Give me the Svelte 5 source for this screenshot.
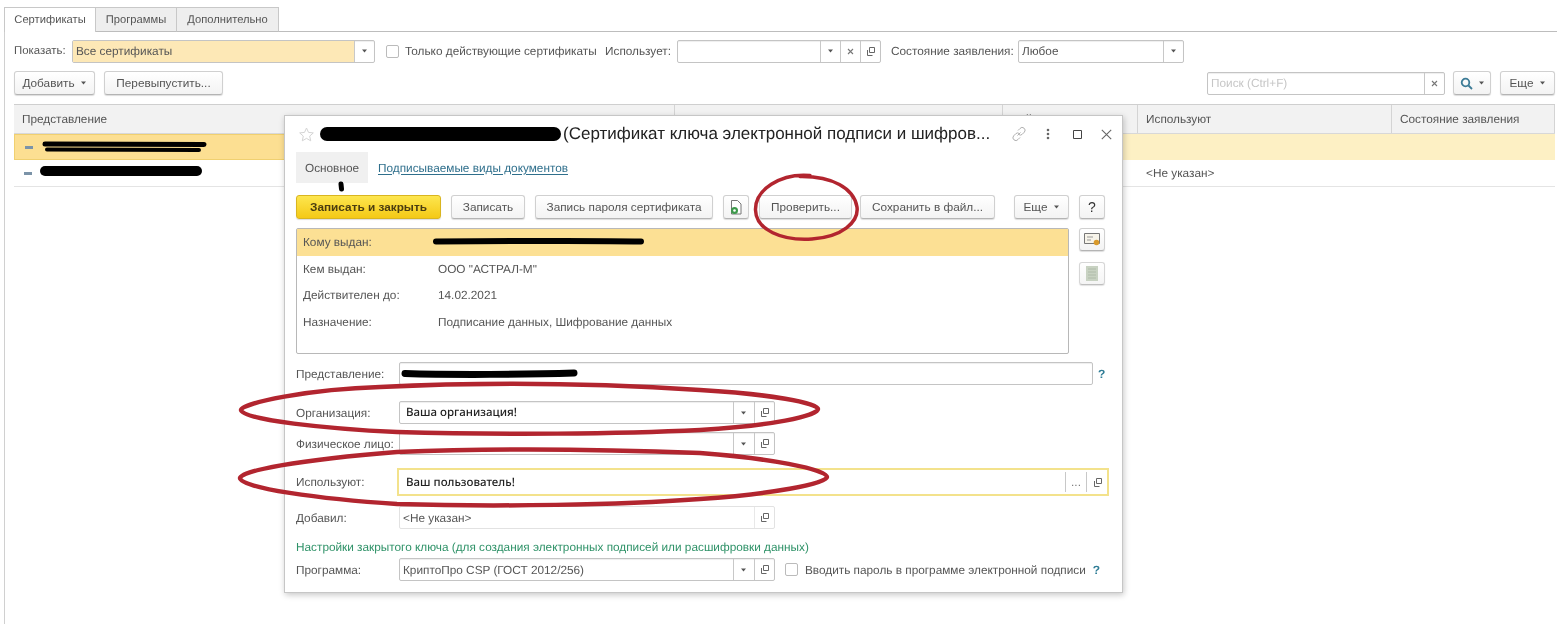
<script>
// filter row and table data
const columns = [
	{ title: "Представление", w: 661 },
	{ title: "Кем выдан", w: 328 },
	{ title: "Действителен до", w: 135 },
	{ title: "Используют", w: 254 },
	{ title: "Состояние заявления", w: 163 }
]

const info = [
	{ label: "Кому выдан:", value: "", current: true },
	{ label: "Кем выдан:", value: 'ООО "АСТРАЛ-М"' },
	{ label: "Действителен до:", value: "14.02.2021" },
	{ label: "Назначение:", value: "Подписание данных, Шифрование данных" }
]
</script>

{#snippet arrow()}
	<svg class="ico" width="7" height="4" viewBox="0 0 7 4"><path d="M1 0.5h5L3.5 3.5z" fill="#555"/></svg>
{/snippet}

{#snippet open()}
	<svg class="ico" width="11" height="11" viewBox="0 0 11 11" fill="none" stroke="#666"><path d="M4.5 1.500h5v5h-5z"/><path d="M2.500 4v5.500h5"/></svg>
{/snippet}

{#snippet cross()}
	<svg class="ico" width="7" height="7" viewBox="0 0 7 7" stroke="#777" stroke-width="1.100"><path d="M1 1l5 5M6 1L1 6"/></svg>
{/snippet}

<div class="page">
	<div class="tabs">
		<div class="tab active">Сертификаты</div>
		<div class="tab t2">Программы</div>
		<div class="tab t3">Дополнительно</div>
	</div>

	<div class="panel">
		<div class="filters">
			<span class="cap show-cap">Показать:</span>
			<div class="field show">
				<span class="val yellow">Все сертификаты</span>
				<span class="fbtn">{@render arrow()}</span>
			</div>
			<span class="check"></span>
			<span class="cap only">Только действующие сертификаты</span>
			<span class="cap uses">Использует:</span>
			<div class="field user">
				<span class="val"></span>
				<span class="fbtn">{@render arrow()}</span>
				<span class="fbtn">{@render cross()}</span>
				<span class="fbtn">{@render open()}</span>
			</div>
			<span class="cap state">Состояние заявления:</span>
			<div class="field status">
				<span class="val">Любое</span>
				<span class="fbtn">{@render arrow()}</span>
			</div>
		</div>

		<div class="toolbar">
			<button class="btn add">Добавить {@render arrow()}</button>
			<button class="btn reissue">Перевыпустить...</button>
			<div class="grow"></div>
			<div class="field search">
				<span class="val hint">Поиск (Ctrl+F)</span>
				<span class="fbtn">{@render cross()}</span>
			</div>
			<button class="btn find">
				<svg width="13" height="13" viewBox="0 0 13 13" fill="none" stroke="#3c7b96" stroke-width="1.800"><circle cx="5.500" cy="5.500" r="3.800"/><path d="M8.500 8.500l3.500 3.500"/></svg>
				{@render arrow()}
			</button>
			<button class="btn more">Еще {@render arrow()}</button>
		</div>

		<div class="table">
			<div class="thead">
				{#each columns as c}
					<div class="th" style="width:{c.w}px">{c.title}</div>
				{/each}
			</div>
			<div class="row selected">
				<div class="cell first" style="width:661px"><span class="dash"></span></div>
				<div class="cell" style="width:880px"></div>
			</div>
			<div class="row">
				<div class="cell" style="width:661px"><span class="dash"></span></div>
				<div class="cell" style="width:463px"></div>
				<div class="cell" style="width:417px">&lt;Не указан&gt;</div>
			</div>
		</div>
	</div>

	<div class="dialog">
		<div class="head">
			<svg class="star" width="15" height="15" viewBox="0 0 15 15" fill="none" stroke="#d4d4d4"><path d="M7.500 1l2 4.400 4.800.5-3.600 3.200 1 4.700-4.200-2.400-4.200 2.400 1-4.700L.7 5.900l4.800-.5z"/></svg>
			<span class="title">(Сертификат ключа электронной подписи и шифров...</span>
			<div class="wintools">
				<svg width="16" height="16" viewBox="0 0 16 16" fill="none" stroke="#b0b0b0" stroke-width="1"><path d="M6.500 9.500l3-3"/><path d="M7 4.500l2-2a2.600 2.600 0 0 1 4.400 3.600l-2.200 2.200a2.600 2.600 0 0 1-3.400.2"/><path d="M9 11.500l-2 2A2.600 2.600 0 0 1 2.600 9.900l2.200-2.200a2.600 2.600 0 0 1 3.400-.2"/></svg>
				<svg width="4" height="12" viewBox="0 0 4 12" fill="#666"><circle cx="2" cy="2" r="1.300"/><circle cx="2" cy="6" r="1.300"/><circle cx="2" cy="10" r="1.300"/></svg>
				<svg width="9" height="9" viewBox="0 0 9 9" fill="none" stroke="#444"><path d="M.5.500h8v8h-8z"/></svg>
				<svg width="11" height="11" viewBox="0 0 11 11" stroke="#666" stroke-width="1.100"><path d="M.8.800l9.400 9.400M10.200.800L.8 10.200"/></svg>
			</div>
		</div>

		<div class="subtabs">
			<div class="subtab">Основное</div>
			<span class="link">Подписываемые виды документов</span>
		</div>

		<div class="actions">
			<button class="btn primary">Записать и закрыть</button>
			<button class="btn w74">Записать</button>
			<button class="btn w178">Запись пароля сертификата</button>
			<button class="btn w26">
				<svg width="12" height="15" viewBox="0 0 12 15"><path d="M1.500.5h6l3.500 3.500v10h-9.500z" fill="#fff" stroke="#777"/><circle cx="4.500" cy="10.500" r="3.500" fill="#3d9a4b"/><circle cx="4.500" cy="10.500" r="1.300" fill="#fff"/></svg>
			</button>
			<button class="btn w93">Проверить...</button>
			<button class="btn w135">Сохранить в файл...</button>
			<button class="btn w55">Еще {@render arrow()}</button>
			<button class="btn help">?</button>
		</div>

		<div class="details">
			<div class="infobox">
				{#each info as r}
					<div class="inforow" class:current={r.current}>
						<span class="ilabel">{r.label}</span>
						<span>{r.value}</span>
					</div>
				{/each}
			</div>
			<div class="side">
				<button class="btn sq">
					<svg width="17" height="14" viewBox="0 0 17 14"><path d="M.5.500h15v10h-15z" fill="#f7f4ea" stroke="#777"/><path d="M3 4h6M3 7h4" stroke="#999"/><circle cx="12.500" cy="9.500" r="2.800" fill="#d99a2b"/></svg>
				</button>
				<button class="btn sq dim">
					<svg width="12" height="15" viewBox="0 0 12 15"><path d="M0 0h12v15H0z" fill="#bfcbb8"/><path d="M2 3h8M2 6h8M2 9h8M2 12h8" stroke="#a2b09b"/></svg>
				</button>
			</div>
		</div>

		<div class="frow name">
			<span class="flabel">Представление:</span>
			<div class="field wide"><span class="val"></span></div>
			<span class="q">?</span>
		</div>
		<div class="frow org">
			<span class="flabel">Организация:</span>
			<div class="field mid">
				<span class="val typed">Ваша организация!</span>
				<span class="fbtn">{@render arrow()}</span>
				<span class="fbtn">{@render open()}</span>
			</div>
		</div>
		<div class="frow person">
			<span class="flabel">Физическое лицо:</span>
			<div class="field mid">
				<span class="val"></span>
				<span class="fbtn">{@render arrow()}</span>
				<span class="fbtn">{@render open()}</span>
			</div>
		</div>
		<div class="frow users">
			<span class="flabel short">Используют:</span>
			<div class="field focus">
				<span class="val typed">Ваш пользователь!</span>
				<span class="fbtn">...</span>
				<span class="fbtn">{@render open()}</span>
			</div>
		</div>
		<div class="frow added">
			<span class="flabel">Добавил:</span>
			<div class="field mid light">
				<span class="val">&lt;Не указан&gt;</span>
				<span class="fbtn">{@render open()}</span>
			</div>
		</div>

		<div class="keynote">Настройки закрытого ключа (для создания электронных подписей или расшифровки данных)</div>
		<div class="frow prog">
			<span class="flabel">Программа:</span>
			<div class="field mid">
				<span class="val">КриптоПро CSP (ГОСТ 2012/256)</span>
				<span class="fbtn">{@render arrow()}</span>
				<span class="fbtn">{@render open()}</span>
			</div>
			<span class="check c2"></span>
			<span class="cap pass">Вводить пароль в программе электронной подписи</span>
			<span class="q q2">?</span>
		</div>
	</div>

	<!-- hand drawn marks on top of the screenshot -->
	<svg class="marks" width="1557" height="625" viewBox="0 0 1557 625" fill="none">
		<g stroke="#000" stroke-linecap="round">
			<path d="M45 144L204 144.500" stroke-width="5"/>
			<path d="M47 149.500L199 150" stroke-width="4"/>
			<path d="M45 171L197 171" stroke-width="10"/>
			<path d="M327 134L554 134" stroke-width="14"/>
			<path d="M436 241.500C500 241 600 240.500 641 241.500" stroke-width="6"/>
			<path d="M405 373.500C450 375 530 374.500 574 373" stroke-width="7"/>
			<path d="M341 184L341.500 189" stroke-width="5"/>
		</g>
		<g stroke="#b2252f" stroke-linecap="round">
			<path d="M810 175.500C780 173 755 190 755.500 210C756 230 782 241 812 239C842 237 859 222 857 207C854 188 832 176 800 176.500" stroke-width="3.500"/>
			<path d="M241 410C241 403 310 389 380 387C480 382 580 382 700 390C770 394 818 403 818 409C818 416 770 426 700 430C620 434 500 435 397 432C330 429 241 420 241 410Z" stroke-width="4.500"/>
			<path d="M240 478C240 471 297 460 397 452C497 448 597 449 700 453C767 458 827 469 827 477C827 484 770 494 700 499C620 505 497 507 397 504C320 499 240 488 240 478Z" stroke-width="4.500"/>
		</g>
	</svg>
</div>

<style>
	:global(body) {
		margin: 0;
		background: #fff;
	}

	.page {
		position: relative;
		width: 1557px;
		height: 625px;
		overflow: hidden;
		font-family: "Liberation Sans", Arial, sans-serif;
		font-size: 11.800px;
		text-rendering: geometricPrecision;
		color: #555;
		background: #fff;
		filter: blur(0.4px);
	}

	button {
		font: inherit;
		color: inherit;
		padding: 0;
	}

	.ico { flex: none; }
	.grow { flex: 1; }

	.tabs {
		display: flex;
		padding: 7px 0 0 4px;
		height: 24px;
		font-size: 11.200px;
	}

	.tab {
		box-sizing: border-box;
		height: 25px;
		display: flex;
		align-items: center;
		justify-content: center;
		border: 1px solid #c8c8c8;
		border-bottom: none;
		background: #eee;
	}

	.tab.active {
		width: 92px;
		background: #fff;
		position: relative;
		z-index: 1;
	}

	.t2 { width: 82px; margin-left: -1px; border-bottom: 1px solid #bdbdbd; }
	.t3 { width: 103px; margin-left: -1px; border-bottom: 1px solid #bdbdbd; }

	.panel {
		border-top: 1px solid #bdbdbd;
		border-left: 1px solid #d0d0d0;
		margin-left: 4px;
		height: 593px;
		padding-left: 9px;
		box-sizing: border-box;
	}

	.filters {
		display: flex;
		align-items: center;
		height: 22px;
		margin-top: 8px;
	}

	.cap { white-space: nowrap; flex: none; }
	.show-cap { width: 58px; font-size: 11.400px; }

	.field {
		box-sizing: border-box;
		display: flex;
		align-items: stretch;
		height: 23px;
		border: 1px solid #c4c4c4;
		border-radius: 2px;
		background: #fff;
		box-shadow: inset 0 1px 1px #eee;
	}

	.val {
		flex: 1;
		display: flex;
		align-items: center;
		padding-left: 3px;
		min-width: 0;
		white-space: nowrap;
	}

	.yellow { background: #fde8b6; }

	.fbtn {
		width: 19px;
		flex: none;
		display: flex;
		align-items: center;
		justify-content: center;
		border-left: 1px solid #c8c8c8;
		color: #777;
	}

	.show { width: 303px; }

	.check {
		box-sizing: border-box;
		display: block;
		width: 13px;
		height: 13px;
		flex: none;
		border: 1px solid #bbb;
		border-radius: 2px;
		margin-left: 11px;
		background: #fff;
	}

	.only { width: 191px; margin-left: 6px; }
	.uses { width: 72px; margin-left: 9px; }
	.user { width: 204px; }
	.state { width: 127px; margin-left: 10px; }
	.status { width: 166px; }

	.toolbar {
		display: flex;
		align-items: center;
		height: 24px;
		margin-top: 9px;
		padding-right: 2px;
	}

	.btn {
		box-sizing: border-box;
		height: 24px;
		display: inline-flex;
		align-items: center;
		justify-content: center;
		gap: 5px;
		border: 1px solid #d0d0d0;
		border-bottom-color: #b4b4b4;
		border-radius: 3px;
		background: linear-gradient(#fff, #f3f3f3);
		box-shadow: 0 1px 1px #ddd;
		white-space: nowrap;
	}

	.add { width: 81px; }
	.reissue { width: 119px; margin-left: 9px; }
	.search { width: 238px; }
	.hint { color: #c6c6c6; }
	.find { width: 38px; margin-left: 8px; }
	.more { width: 55px; margin-left: 9px; }

	.table {
		width: 1541px;
		margin-top: 9px;
		border-top: 1px solid #cfcfcf;
	}

	.thead {
		display: flex;
		height: 28px;
		background: #f2f2f2;
		border-bottom: 1px solid #d8d8d8;
	}

	.th {
		box-sizing: border-box;
		padding-left: 8px;
		display: flex;
		align-items: center;
		border-right: 1px solid #d4d4d4;
		white-space: nowrap;
	}

	.row {
		display: flex;
		height: 26px;
		border-bottom: 1px solid #e4e4e4;
	}

	.selected {
		background: #fdf0c4;
		border-bottom: none;
	}

	.cell {
		box-sizing: border-box;
		padding-left: 8px;
		display: flex;
		align-items: center;
	}

	.first {
		background: #fcdf92;
		border: 1px solid #f0d070;
	}

	.dash {
		display: block;
		width: 8px;
		height: 3px;
		background: #7b93a8;
		margin-left: 2px;
	}

	.dialog {
		position: absolute;
		left: 284px;
		top: 115px;
		width: 839px;
		height: 478px;
		box-sizing: border-box;
		background: #fff;
		border: 1px solid #c6c6c6;
		box-shadow: 1px 2px 6px rgba(0, 0, 0, 0.22);
		padding: 0 0 0 11px;
	}

	.head {
		display: flex;
		align-items: center;
		height: 36px;
		padding-left: 3px;
	}

	.title {
		margin-left: 249px;
		width: 426px;
		flex: none;
		font-size: 17px;
		color: #222;
		white-space: nowrap;
	}

	.wintools {
		display: flex;
		align-items: center;
		margin-left: 22px;
	}

	.wintools svg:nth-child(2) { margin-left: 19px; }
	.wintools svg:nth-child(3) { margin-left: 23px; }
	.wintools svg:nth-child(4) { margin-left: 19px; }

	.subtabs {
		display: flex;
		align-items: center;
		height: 31px;
	}

	.subtab {
		width: 72px;
		height: 31px;
		display: flex;
		align-items: center;
		justify-content: center;
		background: #f0f0f0;
	}

	.link {
		margin-left: 10px;
		color: #2f6f8c;
		text-decoration: underline;
		text-underline-offset: 2px;
	}

	.actions {
		display: flex;
		margin-top: 12px;
		padding-left: 0;
	}

	.actions .btn { margin-right: 10px; }
	.primary {
		width: 145px;
		background: linear-gradient(#fde64f, #f4c916);
		border-color: #d9b520;
		color: #4a3d10;
		font-weight: 700;
	}
	.w74 { width: 74px; }
	.w178 { width: 178px; }
	.w26 { width: 26px; }
	.w93 { width: 93px; margin-right: 8px !important; }
	.w135 { width: 135px; margin-right: 19px !important; }
	.w55 { width: 55px; }
	.help { width: 26px; font-size: 14px; color: #333; }

	.details {
		display: flex;
		margin-top: 9px;
	}

	.infobox {
		box-sizing: border-box;
		width: 773px;
		height: 126px;
		border: 1px solid #b8b8b8;
		border-radius: 2px;
	}

	.inforow {
		display: flex;
		height: 26.500px;
		align-items: center;
		padding-left: 6px;
	}

	.inforow.current { background: #fce094; }
	.ilabel { width: 135px; flex: none; }

	.side {
		display: flex;
		flex-direction: column;
		gap: 11px;
		margin-left: 10px;
	}

	.sq { width: 26px; height: 23px; }
	.dim { opacity: 0.85; }

	.frow {
		display: flex;
		align-items: center;
	}

	.flabel { width: 103px; flex: none; white-space: nowrap; }
	.flabel.short { width: 101px; }

	.name { margin-top: 8px; }
	.org { margin-top: 16px; }
	.person { margin-top: 8px; }
	.users { margin-top: 13px; }
	.added { margin-top: 10px; }

	.wide { width: 694px; }
	.wide .val { height: 100%; }
	.mid { width: 376px; }
	.mid .fbtn { width: 19.500px; }
	.light { border-color: #e2e2e2; box-shadow: none; }
	.light .fbtn { border-left-color: #e8e8e8; }

	.typed {
		font-family: "Noto Sans", "Open Sans", sans-serif;
		font-weight: 500;
		font-size: 11.500px;
		color: #222;
		padding-left: 6px;
	}

	.focus {
		width: 712px;
		height: 28px;
		border: 2px solid #f3e28c;
		border-radius: 0;
		box-shadow: none;
	}

	.focus .typed { padding-left: 7px; }
	.focus .fbtn { width: 20px; margin: 2px 0; }

	.q {
		margin-left: 5px;
		color: #2f7d96;
		font-weight: 700;
		font-size: 12px;
	}

	.keynote {
		margin-top: 12px;
		height: 13px;
		line-height: 13px;
		color: #2f9268;
	}

	.prog { margin-top: 4px; }
	.c2 { margin-left: 10px; }
	.pass { margin-left: 7px; }
	.q2 { margin-left: 7px; }

	.marks {
		position: absolute;
		left: 0;
		top: 0;
		pointer-events: none;
	}
</style>
